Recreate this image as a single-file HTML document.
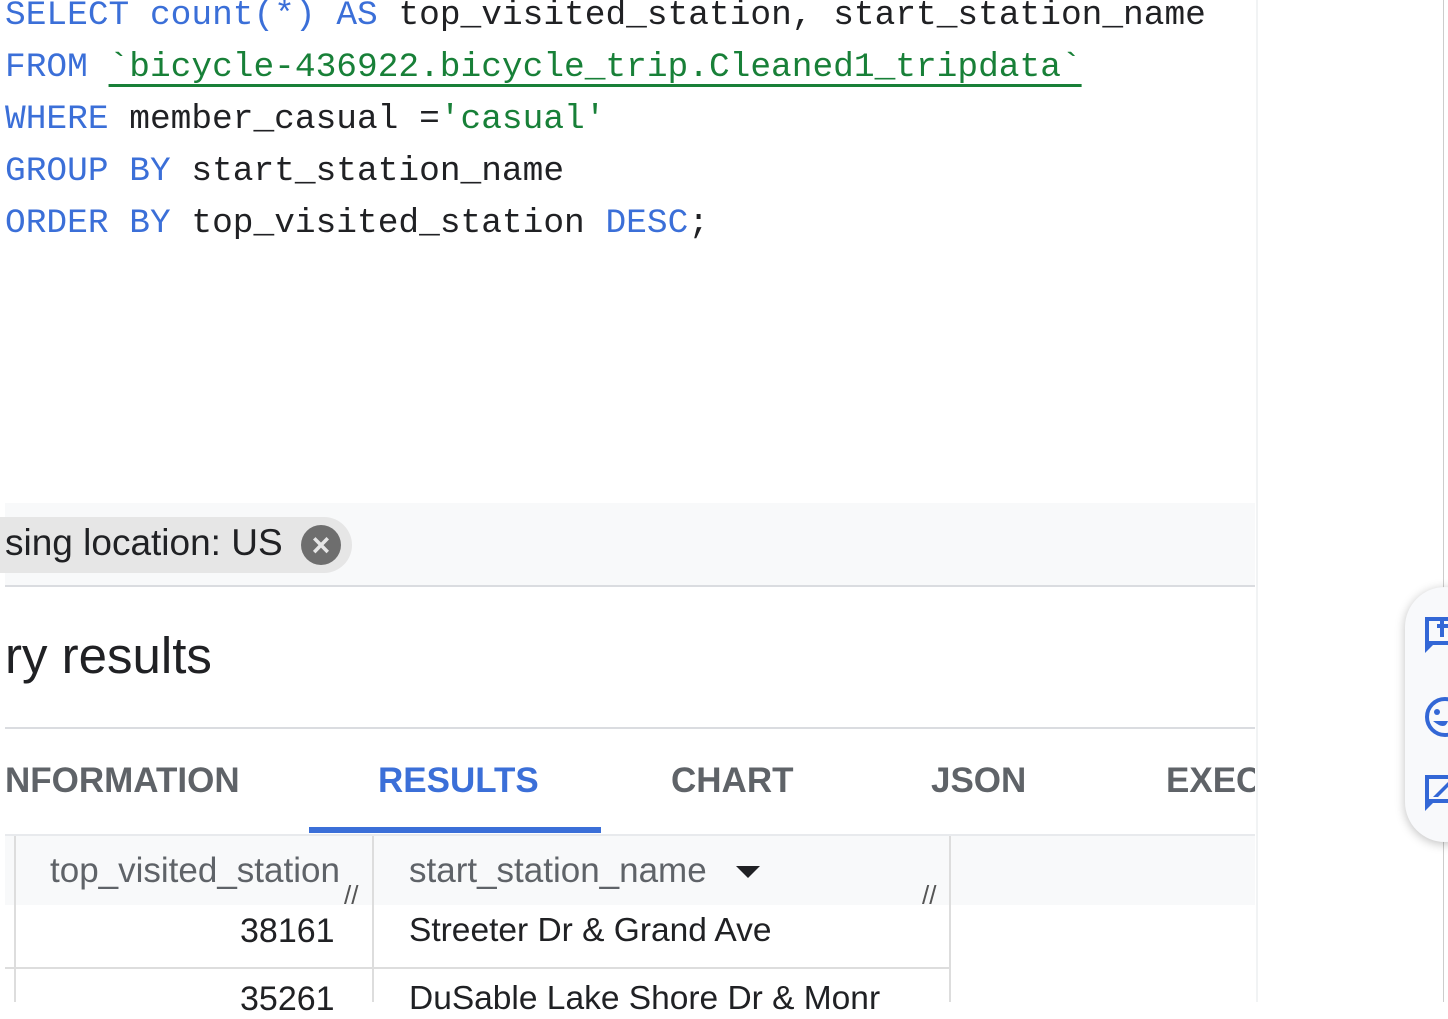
<!DOCTYPE html>
<html><head><style>
body{margin:0;width:1448px;height:1002px;overflow:hidden;background:#fff;font-family:"Liberation Sans",sans-serif;position:relative}
.a{position:absolute}
.code{font-family:"Liberation Mono",monospace;font-size:34.5px;line-height:52px;white-space:pre;left:5px;top:-10px;color:#202124}
.k{color:#3b6fd8}.s{color:#188038}
</style></head><body>
<div class="a code"><span class="k">SELECT</span> <span class="k">count(*)</span> <span class="k">AS</span> top_visited_station, start_station_name
<span class="k">FROM</span> <span class="s" style="text-decoration:underline;text-underline-offset:8px">`bicycle-436922.bicycle_trip.Cleaned1_tripdata`</span>
<span class="k">WHERE</span> member_casual =<span class="s">'casual'</span>
<span class="k">GROUP</span> <span class="k">BY</span> start_station_name
<span class="k">ORDER</span> <span class="k">BY</span> top_visited_station <span class="k">DESC</span>;</div>
<div class="a" style="left:1256px;top:0;width:2px;height:1002px;background:#f1f3f4"></div>
<div class="a" style="left:1443px;top:0;width:1px;height:1002px;background:#ccc"></div>
<div class="a" style="left:5px;top:503px;width:1250px;height:82px;background:#f8f9fa"></div>
<div class="a" style="left:0;top:517px;width:352px;height:56px;background:#e6e6e6;border-radius:0 28px 28px 0"></div>
<div class="a" style="left:5px;top:522px;font-size:37px;color:#202124">sing location: US</div>
<div class="a" style="left:301px;top:525px;width:40px;height:40px;border-radius:50%;background:#6e6e6e;color:#e6e6e6;font-size:32px;font-weight:bold;text-align:center;line-height:40px">×</div>
<div class="a" style="left:5px;top:585px;width:1250px;height:2px;background:#dadce0"></div>
<div class="a" style="left:5px;top:626px;font-size:51px;color:#202124">ry results</div>
<div class="a" style="left:5px;top:727px;width:1250px;height:2px;background:#dadce0"></div>
<div class="a" style="top:761px;font-size:35px;font-weight:bold;color:#5f6368;left:5px">NFORMATION</div>
<div class="a" style="top:761px;font-size:35px;font-weight:bold;color:#3b6fd8;left:378px">RESULTS</div>
<div class="a" style="top:761px;font-size:35px;font-weight:bold;color:#5f6368;left:671px">CHART</div>
<div class="a" style="top:761px;font-size:35px;font-weight:bold;color:#5f6368;left:931px">JSON</div>
<div class="a" style="top:761px;font-size:35px;font-weight:bold;color:#5f6368;left:1166px;width:89px;overflow:hidden;white-space:nowrap">EXECUTION</div>
<div class="a" style="left:309px;top:827px;width:292px;height:6px;background:#3b6fd8"></div>
<div class="a" style="left:5px;top:834px;width:1250px;height:2px;background:#e8eaed"></div>
<div class="a" style="left:5px;top:836px;width:1250px;height:69px;background:#f8f9fa"></div>
<div class="a" style="left:5px;top:905px;width:945px;height:97px;background:#fff"></div>
<div class="a" style="left:14px;top:836px;width:2px;height:166px;background:#ddd"></div>
<div class="a" style="left:372px;top:836px;width:2px;height:166px;background:#ddd"></div>
<div class="a" style="left:949px;top:836px;width:2px;height:166px;background:#ddd"></div>
<div class="a" style="left:5px;top:967px;width:945px;height:2px;background:#ddd"></div>
<div class="a" style="left:50px;top:851px;font-size:35px;color:#5f6368">top_visited_station</div>
<div class="a" style="left:409px;top:851px;font-size:35px;color:#5f6368">start_station_name</div>
<div class="a" style="left:736px;top:866px;width:0;height:0;border-left:12px solid transparent;border-right:12px solid transparent;border-top:12px solid #202124"></div>
<div class="a" style="left:344px;top:880px;font-size:26px;color:#555">//</div>
<div class="a" style="left:922px;top:880px;font-size:26px;color:#555">//</div>
<div class="a" style="left:240px;top:912px;font-size:34px;color:#202124">38161</div>
<div class="a" style="left:409px;top:912px;font-size:33.5px;color:#202124">Streeter Dr &amp; Grand Ave</div>
<div class="a" style="left:240px;top:980px;font-size:34px;color:#202124">35261</div>
<div class="a" style="left:409px;top:980px;font-size:33.5px;color:#202124">DuSable Lake Shore Dr &amp; Monr</div>
<div class="a" style="left:1405px;top:587px;width:80px;height:255px;background:#f8f9fb;border-radius:40px;box-shadow:0 2px 10px rgba(0,0,0,.25)"></div>
<svg class="a" style="left:1425px;top:615px" width="23" height="200" fill="#3367d6">
<path d="M0 2h23v28H8l-8 8z" /><rect x="4" y="6" width="19" height="20" fill="#f8f9fb"/><rect x="12" y="9" width="11" height="4"/><rect x="15" y="6" width="4" height="16"/>
<circle cx="20" cy="102" r="18" fill="none" stroke="#3367d6" stroke-width="4"/><circle cx="12" cy="97" r="3"/><path d="M8 106q12 10 15 0z"/>
<path d="M0 160h23v28H8l-8 8z"/><rect x="4" y="164" width="19" height="20" fill="#f8f9fb"/><path d="M8 182l15-15v5l-10 10z"/>
</svg>
</body></html>
